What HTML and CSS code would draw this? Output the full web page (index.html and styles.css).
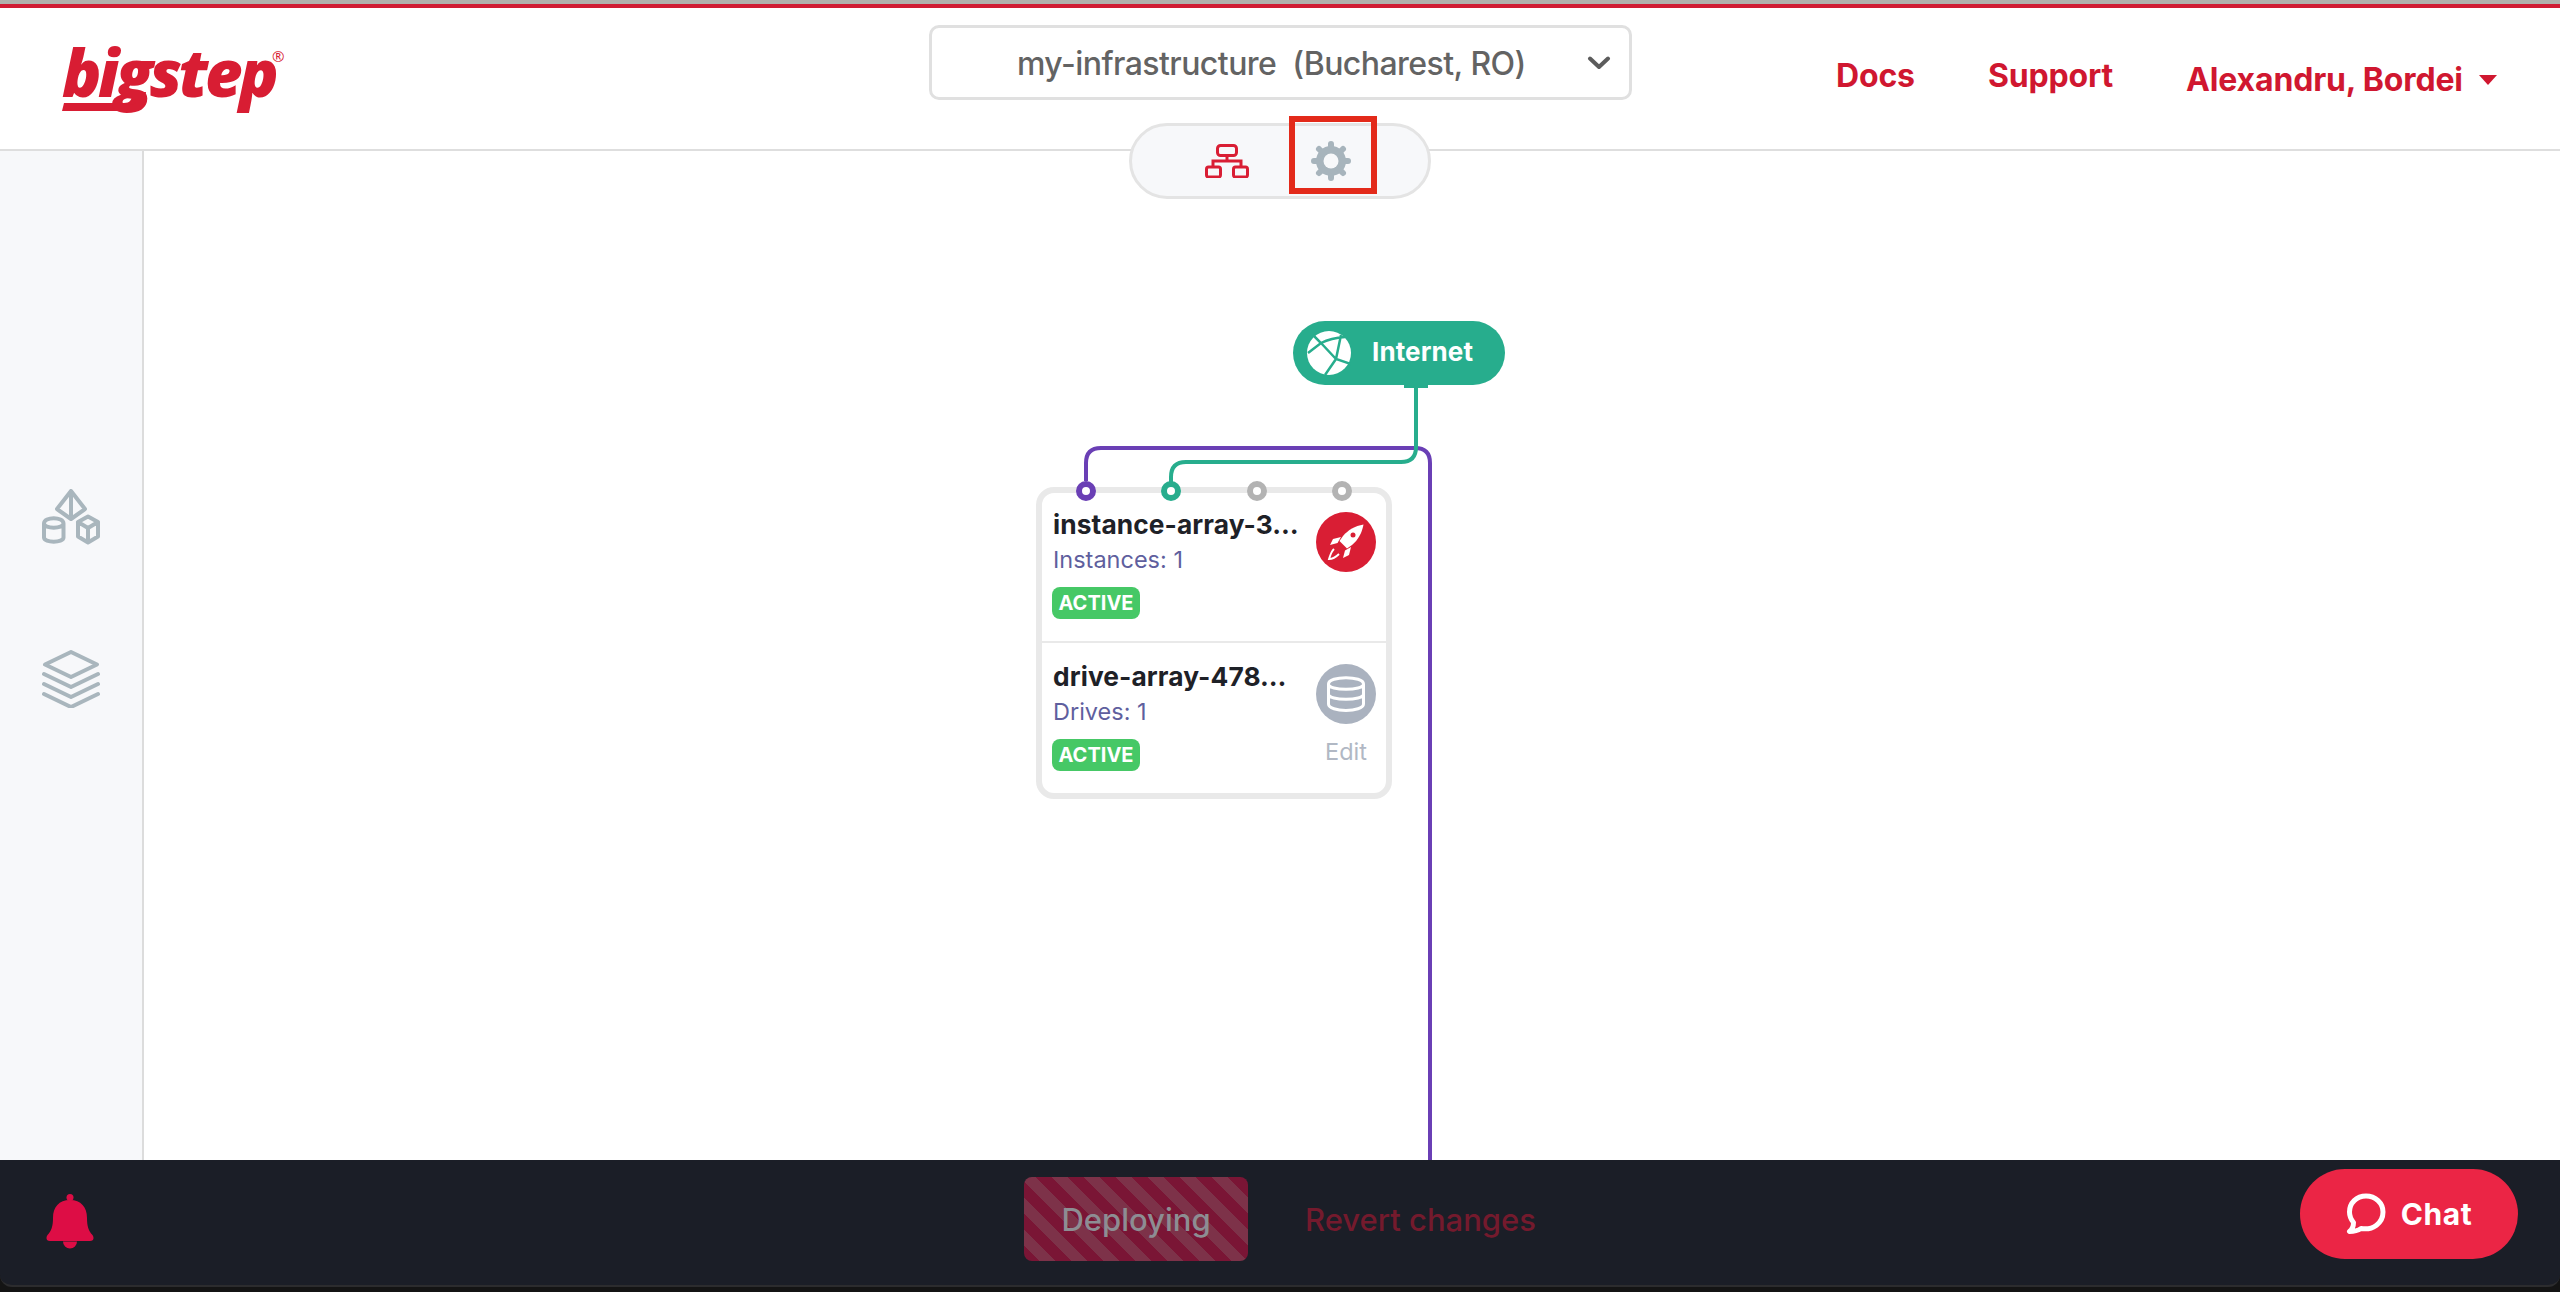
FILE: index.html
```html
<!DOCTYPE html>
<html lang="en">
<head>
<meta charset="utf-8">
<title>Bigstep infrastructure</title>
<link rel="stylesheet" href="styles.css">
</head>
<body>
<div class="page">
  <div class="top-strip"></div>
  <header class="header">
    <a class="logo"><span class="logo-text">bigstep</span><sup class="logo-reg">®</sup>
      <svg class="logo-bar" viewBox="0 0 100 24" width="100" height="24"><path d="M2 13H62C68 13 70 10 71 2L84 2C82 16 78 21 66 21H0Z"/></svg>
    </a>
    <div class="select">
      <span class="select-text">my-infrastructure&nbsp; (Bucharest, RO)</span>
      <svg class="chevron" viewBox="0 0 24 14" width="24" height="14"><path d="M3 2.500L12 11L21 2.500"/></svg>
    </div>
    <nav class="nav">
      <a class="nav-link">Docs</a>
      <a class="nav-link">Support</a>
      <a class="nav-link nav-user">Alexandru, Bordei <span class="caret"></span></a>
    </nav>
    <div class="toggle">
      <svg class="icon-net" viewBox="0 0 44 34" width="44" height="34">
        <rect x="12.500" y="1.500" width="19" height="10" rx="3"/>
        <path d="M22 11.500V17M8 23V17H36V23"/>
        <rect x="1.500" y="23" width="14" height="10" rx="2"/>
        <rect x="28.500" y="23" width="14" height="10" rx="2"/>
      </svg>
      <div class="gear-wrap">
        <svg class="icon-gear" viewBox="0 0 40 40" width="40" height="40">
          <circle class="gear-ring" cx="20" cy="20" r="15"/>
          <path class="gear-teeth" d="M20 3V37M3 20H37M8 8L32 32M32 8L8 32"/>
          <circle class="gear-hole" cx="20" cy="20" r="7.500"/>
        </svg>
      </div>
      <div class="highlight"></div>
    </div>
  </header>
  <main class="main">
    <aside class="sidebar">
      <svg class="side-icon" viewBox="0 0 58 56" width="58" height="56">
        <path d="M29 2L43 20L29 30L15 20ZM29 2V30"/>
        <path d="M2 34.500C2 27.500 21.500 27.500 21.500 34.500V48.500C21.500 54 2 54 2 48.500ZM2 34.500C2 40 21.500 40 21.500 34.500"/>
        <path d="M46 27.500L56 33V47.500L46 53.500L36 47.500V33ZM36 33L46 39L56 33M46 39V53.500"/>
      </svg>
      <svg class="side-icon" viewBox="0 0 58 58" width="58" height="58">
        <path d="M29 2L55 14.500L29 27L3 14.500Z"/>
        <path d="M2 24L29 37L56 24M2 34L29 47L56 34M2 44L29 57L56 44"/>
      </svg>
    </aside>
    <section class="canvas">
      <svg class="wires" width="1400" height="1009" viewBox="0 0 1400 1009">
        <path class="wire-purple" d="M942 330V312Q942 297 957 297H1271Q1286 297 1286 312V1009"/>
        <path class="wire-teal" d="M1272 236V296Q1272 311 1257 311H1042Q1027 311 1027 326V340"/>
      </svg>
      <div class="internet">
        <svg class="globe" viewBox="0 0 44 44" width="44" height="44">
          <circle cx="22" cy="22" r="22" fill="#fff"/>
          <path d="M1 22L14 12Q24 7 38 6M6 4L14 12L29 28L44 33M29 28L18 44M29 28L34 4"/>
        </svg>
        <span>Internet</span>
        <i class="internet-tab"></i>
      </div>
      <div class="card">
        <i class="port port-purple port-a"></i>
        <i class="port port-teal port-b"></i>
        <i class="port port-c"></i>
        <i class="port port-d"></i>
        <div class="card-row">
          <div class="card-info">
            <div class="card-title">instance-array-3…</div>
            <div class="card-sub">Instances: 1</div>
            <span class="badge">ACTIVE</span>
          </div>
          <div class="card-action">
            <svg class="round-icon" viewBox="0 0 60 60" width="60" height="60">
              <circle cx="30" cy="30" r="30" fill="#d91e34"/>
              <path fill="#fff" d="M47.500 12.500C39 14 32 18 27 24L23.500 29L31 36.500L36 33C42 28 46 21 47.500 12.500Z"/>
              <path fill="#fff" d="M25 25L17 27L14 33L21.500 31ZM35 35L33 43L27 46L29 38.500Z"/>
              <circle cx="37" cy="23" r="2.500" fill="#d91e34"/>
              <path fill="none" stroke="#fff" stroke-width="1.800" d="M18 37C15 40 14 44 13 47C17 47 20 45 23 42"/>
            </svg>
          </div>
        </div>
        <div class="card-row card-row-last">
          <div class="card-info">
            <div class="card-title">drive-array-478…</div>
            <div class="card-sub">Drives: 1</div>
            <span class="badge">ACTIVE</span>
          </div>
          <div class="card-action">
            <svg class="round-icon" viewBox="0 0 60 60" width="60" height="60">
              <circle cx="30" cy="30" r="30" fill="#aab2bf"/>
              <path fill="none" stroke="#fff" stroke-width="3" d="M12.500 20C12.500 11.500 47.500 11.500 47.500 20V40C47.500 48.500 12.500 48.500 12.500 40ZM12.500 20C12.500 27 47.500 27 47.500 20M12.500 30C12.500 37 47.500 37 47.500 30"/>
            </svg>
            <a class="edit">Edit</a>
          </div>
        </div>
      </div>
    </section>
  </main>
  <footer class="footer">
    <svg class="bell" viewBox="0 0 48 55" width="48" height="55">
      <circle cx="24" cy="3.500" r="3.500"/>
      <path d="M24 6C13 6 7 13 7 24C7 32 5.500 37 1.500 41C-.5 44 .5 47 4 47H44C47.500 47 48.500 44 46.500 41C42.500 37 41 32 41 24C41 13 35 6 24 6ZM17 47.500A7 7 0 0 0 31 47.500Z"/>
    </svg>
    <button class="deploy">Deploying</button>
    <a class="revert">Revert changes</a>
    <button class="chat">
      <svg viewBox="0 0 40 42" width="40" height="42"><path d="M20 3C10.500 3 3.500 10 3.500 19C3.500 23.500 5 26.500 7.500 29.500C7.500 33 6 36.500 3.500 38.500C8 38.500 12 37.500 15 35.500C27 37.500 37 30 37 19C37 10 29.500 3 20 3Z"/></svg>
      <span>Chat</span>
    </button>
  </footer>
  <div class="bottom-strip"></div>
</div>
</body>
</html>
```

FILE: styles.css
```css
* { box-sizing: border-box; }
html, body { margin: 0; padding: 0; height: 100%; background: #fff; }
body { font-family: Inter, "Liberation Sans", sans-serif; overflow: hidden; }

.page { width: 2560px; height: 1292px; display: flex; flex-direction: column; background: #141414; }
.top-strip { height: 8px; flex: none; background: linear-gradient(#b1b1ac 0 4px, #d01c33 4px); }

/* header */
.header { position: relative; z-index: 2; height: 143px; flex: none; background: #fff; border-bottom: 2px solid #dedede; display: flex; align-items: flex-start; padding: 17px 0 0 62px; }
.logo { position: relative; display: block; width: 221px; height: 100px; color: #d81d33; white-space: nowrap; }
.logo-text { display: inline-block; font: italic 800 65px/1 "Open Sans", sans-serif; letter-spacing: -3.400px; margin-top: 15px; }
.logo-reg { position: absolute; left: 210px; top: 24px; font: 400 15px/1 "Open Sans", sans-serif; }
.logo-bar { position: absolute; left: 0; top: 65px; fill: #d81d33; z-index: -1; }
.select { margin-left: 646px; width: 703px; height: 75px; border: 3px solid #e0e0e0; border-radius: 10px; display: flex; align-items: center; justify-content: space-between; padding: 0 18px 0 85px; }
.select-text { font-size: 32px; font-weight: 500; color: #636363; white-space: nowrap; letter-spacing: -.55px; margin-top: 2px; }
.chevron { fill: none; stroke: #5c5c5c; stroke-width: 4; stroke-linecap: round; stroke-linejoin: round; }
.nav { margin-left: 204px; display: flex; align-items: flex-start; gap: 73px; padding-top: 31px; }
.nav-link { font-size: 32px; line-height: 40px; font-weight: 700; color: #d01730; white-space: nowrap; letter-spacing: -.15px; }
.nav-user { margin-top: 4px; }
.caret { display: inline-block; width: 0; height: 0; margin-left: 9px; vertical-align: 6px; border: 9px solid transparent; border-top: 10px solid #d01730; border-bottom: 0; }
.toggle { position: absolute; left: 1129px; top: 115px; width: 302px; height: 76px; background: #f7f8fa; border: 3px solid #e4e4e4; border-radius: 38px; display: flex; align-items: center; padding-left: 73px; gap: 62px; }
.icon-net { fill: none; stroke: #d91e34; stroke-width: 3; }
.icon-gear { display: block; }
.gear-ring { fill: #a7b4bc; stroke: none; }
.gear-teeth { fill: none; stroke: #a7b4bc; stroke-width: 6; stroke-linecap: round; }
.gear-hole { fill: #f7f8fa; }
.gear-wrap { display: flex; }
.highlight { position: absolute; left: 157px; top: -10px; width: 88px; height: 78px; border: 6px solid #e32a1a; }

/* main */
.main { flex: none; height: 1009px; display: flex; }
.sidebar { width: 144px; flex: none; background: #f7f8fa; border-right: 2px solid #dcdcdc; display: flex; flex-direction: column; align-items: center; padding-top: 338px; gap: 105px; }
.side-icon { fill: none; stroke: #a9b6bd; stroke-width: 4; stroke-linejoin: round; stroke-linecap: round; flex: none; }
.canvas { position: relative; flex: 1; background: #fff; }
.wires { position: absolute; left: 0; top: 0; fill: none; stroke-width: 4; }
.wire-purple { stroke: #6a3fb5; }
.wire-teal { stroke: #27ad8d; }

.internet { position: absolute; left: 1149px; top: 170px; width: 212px; height: 64px; border-radius: 32px; background: #27ad8d; color: #fff; display: flex; align-items: center; padding-left: 14px; gap: 21px; font-size: 26px; font-weight: 700; letter-spacing: .1px; }
.internet span { margin-top: -3px; }
.globe { fill: none; }
.globe path { stroke: #27ad8d; stroke-width: 2.500; fill: none; }
.internet-tab { position: absolute; left: 111px; bottom: -3px; width: 24px; height: 3px; background: #27ad8d; }

.card { position: absolute; left: 892px; top: 336px; width: 356px; height: 312px; background: #fff; border: 6px solid #e9e9e9; border-radius: 18px; display: flex; flex-direction: column; }
.port { position: absolute; top: -12px; width: 20px; height: 20px; border-radius: 50%; background: #fff; border: 6px solid #b3b3b3; }
.port-purple { border-color: #6a3fb5; }
.port-teal { border-color: #27ad8d; }
.port-a { left: 34px; }
.port-b { left: 119px; }
.port-c { left: 205px; }
.port-d { left: 290px; }
.card-row { height: 150px; flex: none; display: flex; justify-content: space-between; padding: 14px 0 0 11px; border-bottom: 2px solid #e9e9e9; }
.card-row-last { height: auto; flex: 1; padding-top: 16px; border-bottom: 0; }
.card-info { width: 250px; display: flex; flex-direction: column; align-items: flex-start; }
.card-title { font-size: 26.300px; line-height: 36px; font-weight: 700; color: #1e2127; white-space: nowrap; letter-spacing: .1px; }
.card-sub { font-size: 23.500px; line-height: 32px; margin-top: 1px; color: #5f5f9e; }
.badge { margin-top: 11px; width: 88px; height: 32px; border-radius: 8px; background: #46c866; color: #fff; font-size: 20px; font-weight: 700; line-height: 32px; text-align: center; margin-left: -1px; }
.card-action { width: 60px; margin-right: 10px; margin-top: 5px; display: flex; flex-direction: column; align-items: center; }
.round-icon { display: block; flex: none; }
.edit { margin-top: 13px; font-size: 23.500px; line-height: 30px; color: #b1b8c4; }

/* footer */
.footer { height: 127px; flex: none; background: #1b1e27; border-bottom: 2px solid #2c2c2e; border-radius: 0 0 12px 12px; display: flex; align-items: flex-start; padding: 0 42px 0 46px; }
.bell { fill: #dd0d45; flex: none; margin-top: 34px; }
.deploy { margin-left: 930px; margin-top: 17px; width: 224px; height: 84px; border: 0; border-radius: 8px; padding: 0; font: 500 31px Inter, sans-serif; color: #8d8d93; background: repeating-linear-gradient(45deg, #7a1535 0 11.300px, #7d3249 11.300px 22.600px); }
.revert { margin-left: 57px; margin-top: 41px; font-size: 31px; line-height: 38px; font-weight: 500; color: #741a2d; white-space: nowrap; }
.chat { margin-left: auto; margin-top: 9px; width: 218px; height: 90px; border: 0; border-radius: 45px; background: #eb2545; color: #fff; display: flex; align-items: center; justify-content: center; gap: 15px; font: 700 30px Inter, sans-serif; letter-spacing: .6px; }
.chat svg { fill: none; stroke: #fff; stroke-width: 5; stroke-linejoin: round; }
.bottom-strip { flex: none; height: 5px; background: #141414; }
```
